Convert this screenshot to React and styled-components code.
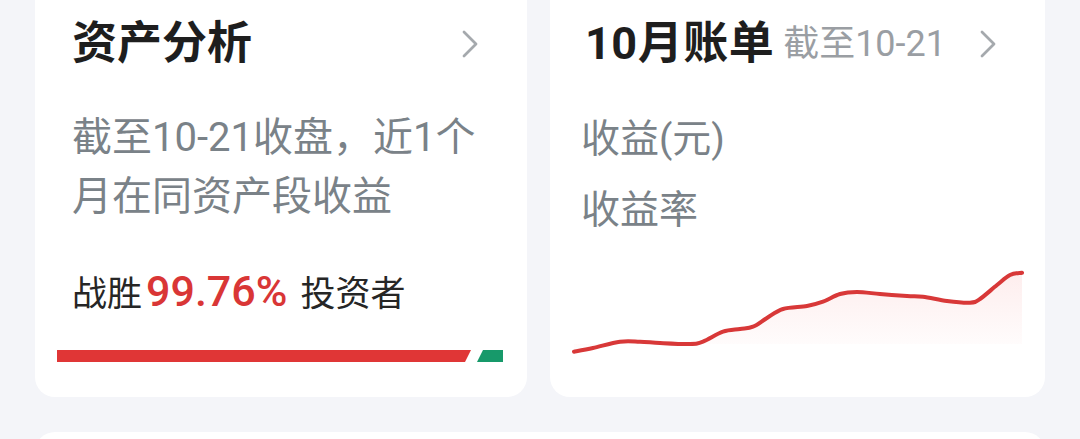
import React from "react";
import styled, { createGlobalStyle } from "styled-components";

const Global = createGlobalStyle`
  html, body { margin: 0; padding: 0; }
  body {
    background: #f4f5f9;
    overflow: hidden;
    font-family: "Roboto", "Noto Sans CJK SC", sans-serif;
  }
`;

const Page = styled.div`
  width: 1080px;
  height: 439px;
  padding: 0 35px;
  box-sizing: border-box;
  overflow: hidden;
`;

const Row = styled.div`
  display: grid;
  grid-template-columns: 492px 495px;
  gap: 23px;
  margin-top: -20px;
`;

const Card = styled.div`
  background: #ffffff;
  border-radius: 20px;
  padding: ${(p) => p.$pad};
  display: flex;
  flex-direction: column;
  box-sizing: border-box;
`;

const Header = styled.div`
  display: flex;
  align-items: center;
  height: 64px;
`;

const Title = styled.div`
  font-family: "Roboto", "Noto Sans CJK SC", sans-serif;
  font-size: ${(p) => p.$size || "45px"};
  letter-spacing: ${(p) => p.$ls || "0"};
  margin-left: ${(p) => p.$indent || "0"};
  font-weight: 700;
  color: #1e1e1e;
  line-height: 64px;
  white-space: nowrap;
`;

const Since = styled.span`
  font-size: 36px;
  font-weight: 400;
  color: #9a9ea3;
  margin-left: 9px;
  line-height: 64px;
  white-space: nowrap;
`;

const ChevronBox = styled.svg`
  margin-left: auto;
  flex: none;
  display: block;
`;

const Desc = styled.div`
  margin-top: 32px;
  font-size: 40px;
  line-height: 59px;
  color: #7a8288;
  white-space: nowrap;
`;

const Beat = styled.div`
  margin-top: 40px;
  height: 50px;
  display: flex;
  align-items: baseline;
  font-size: 35px;
  line-height: 50px;
  color: #262626;
  white-space: nowrap;
`;

const Percent = styled.span`
  font-size: 43px;
  font-weight: 500;
  color: #d93636;
  margin: 0 13px 0 4px;
`;

const Bar = styled.div`
  margin: 34px -24px 0 -15px;
  height: 12px;
  display: flex;
  gap: 6px;
`;

const Seg = styled.div`
  height: 100%;
  background: ${(p) => p.$color};
  flex: ${(p) => (p.$grow ? "1" : "none")};
  width: ${(p) => (p.$grow ? "auto" : p.$w)};
  clip-path: ${(p) => p.$clip};
`;

const Label = styled.div`
  margin-top: ${(p) => p.$mt};
  font-size: 39px;
  line-height: 58px;
  color: #7a8288;
  white-space: nowrap;
`;

const Chart = styled.svg`
  display: block;
  margin: 23px -29px 0 -15px;
  width: 460px;
  height: 96px;
`;

const BottomCard = styled.div`
  margin-top: 35px;
  height: 120px;
  background: #ffffff;
  border-radius: 20px;
`;

const Chevron = () => (
  <ChevronBox width="18" height="30" viewBox="0 0 18 30">
    <path
      d="M3 3 L15 15 L3 27"
      fill="none"
      stroke="#a5a9ad"
      strokeWidth="2.8"
      strokeLinecap="round"
      strokeLinejoin="round"
    />
  </ChevronBox>
);

const pts = [
  [8, 89.7], [27, 86], [54, 79.7], [74, 79.7], [94, 81], [124, 82],
  [137, 79.7], [157, 69.7], [174, 67], [187, 64.7], [201, 56], [217, 47],
  [241, 44], [257, 39.7], [274, 32], [291, 30], [314, 32], [341, 34],
  [357, 34.7], [381, 39], [404, 40.7], [414, 37], [431, 23], [444, 13],
  [456, 10.7],
];

function smooth(p) {
  let d = `M${p[0][0]} ${p[0][1]}`;
  for (let i = 0; i < p.length - 1; i++) {
    const p0 = p[i - 1] || p[i];
    const p1 = p[i];
    const p2 = p[i + 1];
    const p3 = p[i + 2] || p2;
    const c1x = p1[0] + (p2[0] - p0[0]) / 6;
    const c1y = p1[1] + (p2[1] - p0[1]) / 6;
    const c2x = p2[0] - (p3[0] - p1[0]) / 6;
    const c2y = p2[1] - (p3[1] - p1[1]) / 6;
    d += ` C${c1x.toFixed(1)} ${c1y.toFixed(1)} ${c2x.toFixed(1)} ${c2y.toFixed(1)} ${p2[0]} ${p2[1]}`;
  }
  return d;
}

const line = smooth(pts);
const area = `${line} L456 82 L8 82 Z`;

export default function App() {
  return (
    <>
      <Global />
      <Page>
        <Row>
          <Card $pad="32px 48px 35px 37px">
            <Header>
              <Title>资产分析</Title>
              <Chevron />
            </Header>
            <Desc>
              截至10-21收盘，近1个
              <br />
              月在同资产段收益
            </Desc>
            <Beat>
              战胜<Percent>99.76%</Percent>投资者
            </Beat>
            <Bar>
              <Seg
                $grow
                $color="#e03636"
                $clip="polygon(0 0, 100% 0, calc(100% - 6px) 100%, 0 100%)"
              />
              <Seg
                $w="26px"
                $color="#17996a"
                $clip="polygon(6px 0, 100% 0, 100% 100%, 0 100%)"
              />
            </Bar>
          </Card>
          <Card $pad="32px 48px 35px 31px">
            <Header>
              <Title $ls="0.5px" $indent="4px">10月账单</Title>
              <Since>截至10-21</Since>
              <Chevron />
            </Header>
            <Label $mt="34px">收益(元)</Label>
            <Label $mt="13px">收益率</Label>
            <Chart viewBox="0 0 460 96">
              <defs>
                <linearGradient id="fillGrad" x1="0" y1="0" x2="0" y2="1">
                  <stop offset="0" stopColor="#f05050" stopOpacity="0.1" />
                  <stop offset="1" stopColor="#f05050" stopOpacity="0.01" />
                </linearGradient>
              </defs>
              <path d={area} fill="url(#fillGrad)" />
              <path
                d={line}
                fill="none"
                stroke="#d83838"
                strokeWidth="4"
                strokeLinecap="round"
                strokeLinejoin="round"
              />
            </Chart>
          </Card>
        </Row>
        <BottomCard />
      </Page>
    </>
  );
}
